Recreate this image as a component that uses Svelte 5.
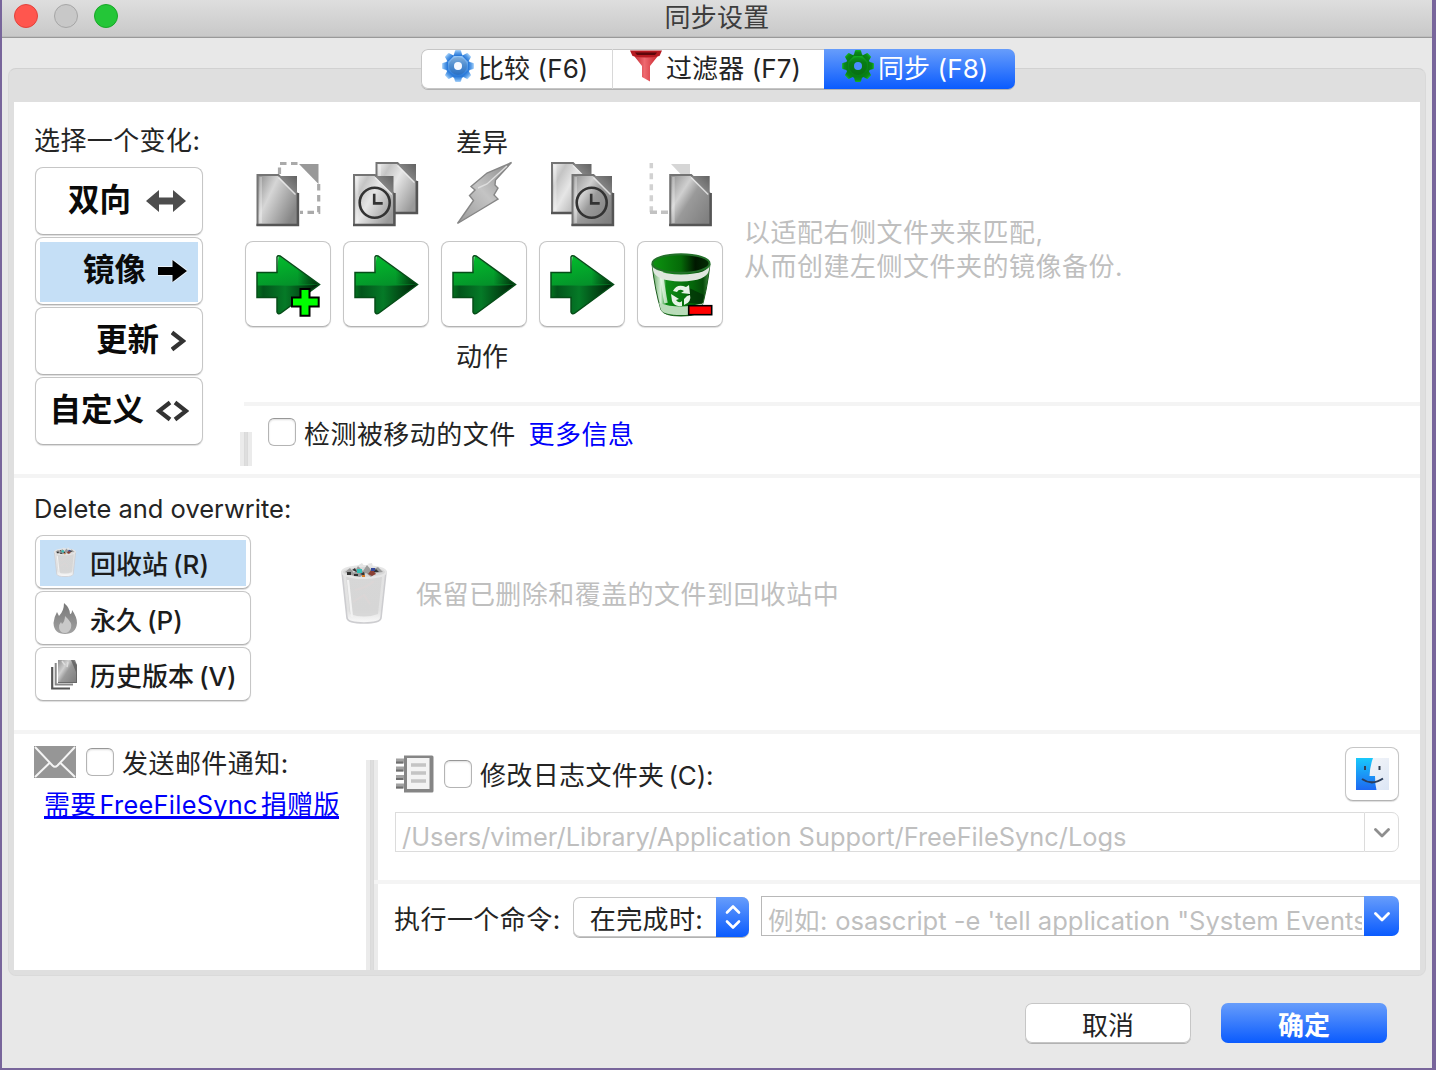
<script>
  const variants = [
    { label: '双向', icon: 'both' },
    { label: '镜像', icon: 'mirror', selected: true },
    { label: '更新', icon: 'gt' },
    { label: '自定义', icon: 'ltgt' }
  ];
  const categories = ['left-only', 'left-newer', 'conflict', 'right-newer', 'right-only'];
  const actions = ['create', 'copy', 'copy', 'copy', 'delete'];
  const deletion = [
    { label: '回收站', key: '(R)', icon: 'trash', selected: true },
    { label: '永久', key: '(P)', icon: 'flame' },
    { label: '历史版本', key: '(V)', icon: 'versions' }
  ];
  const teeth = [0, 45, 90, 135, 180, 225, 270, 315];
</script>

{#snippet gear(fill, hole)}
  <svg class="tab-icon" viewBox="0 0 32 32">
    <g fill={fill}>
      <circle cx="16" cy="16" r="12.2" />
      {#each teeth as a}
        <path d="M11.6 6 L13 .8 Q13.2 .1 14 .1 H18 Q18.8 .1 19 .8 L20.4 6Z" transform="rotate({a} 16 16)" />
      {/each}
    </g>
    <circle cx="16" cy="16" r="6.5" fill="none" stroke="#000" stroke-opacity=".1" stroke-width="5" />
    <circle cx="16" cy="16" r="4" fill={hole} />
  </svg>
{/snippet}

{#snippet doc(x, y, fill)}
  <g transform="translate({x} {y})">
    <path d="M1 1 H22 L41 20 V51 H1Z" fill={fill} stroke="#747474" stroke-width="2" />
    <path d="M3 3 V49 H5.5 V3Z" fill="#fff" opacity=".3" />
    <path d="M22 2 H40.5 V21.5Z" fill="url(#fold)" />
    <path d="M22 3.5 L39 20.5" stroke="#eee" stroke-width="1.6" opacity=".8" />
    <path d="M0 51 H41.5 V19" fill="none" stroke="#555" stroke-width="2.4" />
  </g>
{/snippet}

{#snippet clock(x, y)}
  <g fill="none" stroke="#333" transform="translate({x} {y})">
    <circle r="15" stroke-width="2.6" />
    <path d="M-.5 -9 V.7 H8" stroke-width="2.6" />
  </g>
{/snippet}

{#snippet trash()}
  <svg class="trash" viewBox="0 0 48 64">
    <path d="M2 10 L7 56 Q8 61 24 61 Q40 61 41 56 L46 10Z" fill="url(#bin)" stroke="#cdcdd0" stroke-width="1.6" />
    <path d="M6 14 Q18 20 30 15 Q38 13 42 15 L38 52 Q24 57 10 52Z" fill="#d3d3d3" opacity=".8" />
    <path d="M15 28 Q26 26 34 19 M13 40 L24 33 L30 42" stroke="#dbd6d6" stroke-width="2" fill="none" />
    <path d="M8 18 L12 55" stroke="#f2f2f2" stroke-width="2.2" />
    <ellipse cx="24" cy="10" rx="22" ry="6" fill="#d8d8d8" stroke="#e6e6e6" stroke-width="2" />
    <path d="M5 10 L10 6 L14 11 L18 4 L23 9 L27 3 L31 8 L38 5 L43 10 L35 11 L31 15 L26 11 L20 15 L14 14Z" fill="#9b9b9b" />
    <path d="M12 8 l3 -2 l2 4z M20 12 l4 -2 l1 4z M33 10 l3 -3 l3 3z M7 10h4v3h-4z M14 12h4v2h-4z" fill="#333" />
    <path d="M28 12 l4 -5 l4 5 l-4 2z" fill="#8a4034" /><path d="M31 6 h4 v3 h-4z" fill="#34489c" />
    <path d="M17 7 h5 v4 h-5z" fill="#31c2b8" /><path d="M22 13 h3 v2 h-3z" fill="#d87a26" />
    <path d="M17 4 l5 -3 l3 4z M27 2 l5 -1 l1 4z" fill="#e4e4e4" />
  </svg>
{/snippet}

<svg class="defs" width="0" height="0">
  <defs>
    <linearGradient id="blueGear" x1="0" y1="0" x2="0" y2="1"><stop offset="0" stop-color="#a5d0f9" /><stop offset=".45" stop-color="#5b9fe8" /><stop offset="1" stop-color="#2273d6" /></linearGradient>
    <linearGradient id="greenGear" x1="0" y1="0" x2="0" y2="1"><stop offset="0" stop-color="#17b823" /><stop offset=".35" stop-color="#0a8a1a" /><stop offset="1" stop-color="#087a14" /></linearGradient>
    <linearGradient id="funnel" x1="0" y1="0" x2="1" y2="0"><stop offset="0" stop-color="#b3141c" /><stop offset=".45" stop-color="#ee6a70" /><stop offset="1" stop-color="#c4161f" /></linearGradient>
    <linearGradient id="fold" x1="0" y1="1" x2="1" y2="0"><stop offset="0" stop-color="#a5a5a5" /><stop offset="1" stop-color="#626262" /></linearGradient>
    <linearGradient id="paper" x1="0" y1="0" x2="1" y2=".6"><stop offset="0" stop-color="#8a8a8a" /><stop offset=".4" stop-color="#d6d6d6" /><stop offset=".65" stop-color="#b4b4b4" /><stop offset="1" stop-color="#868686" /></linearGradient>
    <linearGradient id="paperLight" x1="0" y1="0" x2="1" y2=".7"><stop offset="0" stop-color="#f4f4f4" /><stop offset=".25" stop-color="#c4c4c4" /><stop offset=".5" stop-color="#e6e6e6" /><stop offset="1" stop-color="#9a9a9a" /></linearGradient>
    <linearGradient id="paperDark" x1="0" y1="0" x2="1" y2=".8"><stop offset="0" stop-color="#8e8e8e" /><stop offset=".35" stop-color="#d0d0d0" /><stop offset=".55" stop-color="#9a9a9a" /><stop offset="1" stop-color="#808080" /></linearGradient>
    <linearGradient id="bolt" x1="1" y1="0" x2="0" y2="1"><stop offset="0" stop-color="#888" /><stop offset=".5" stop-color="#c4c4c4" /><stop offset="1" stop-color="#9a9a9a" /></linearGradient>
    <linearGradient id="arrowTop" x1="0" y1="0" x2=".25" y2="1"><stop offset="0" stop-color="#02c32c" /><stop offset=".6" stop-color="#04922a" /><stop offset="1" stop-color="#037023" /></linearGradient>
    <linearGradient id="arrowLow" x1="0" y1="0" x2="1" y2="0"><stop offset="0" stop-color="#03721e" /><stop offset=".1" stop-color="#02551b" /><stop offset=".45" stop-color="#057a27" /><stop offset="1" stop-color="#001d06" /></linearGradient>
    <linearGradient id="tip" x1="0" y1="0" x2="1" y2="0"><stop offset=".65" stop-color="#001d06" stop-opacity="0" /><stop offset="1" stop-color="#001d06" stop-opacity=".9" /></linearGradient>
    <linearGradient id="bucket" x1="0" y1="0" x2="1" y2="0"><stop offset="0" stop-color="#5fa45f" /><stop offset=".15" stop-color="#d8f0d8" /><stop offset=".25" stop-color="#0d8d15" /><stop offset=".7" stop-color="#04660a" /><stop offset=".88" stop-color="#064a0a" /><stop offset="1" stop-color="#4b9a4b" /></linearGradient>
    <linearGradient id="mouth" x1="0" y1="0" x2="1" y2="0"><stop offset="0" stop-color="#0c9410" /><stop offset=".5" stop-color="#056a08" /><stop offset=".75" stop-color="#001800" /><stop offset="1" stop-color="#022c04" /></linearGradient>
    <linearGradient id="bin" x1="0" y1="0" x2="0" y2="1"><stop offset="0" stop-color="#e3e3e3" /><stop offset=".75" stop-color="#e2e2e2" /><stop offset="1" stop-color="#fafafa" /></linearGradient>
    <linearGradient id="flame" x1="0" y1="0" x2="0" y2="1"><stop offset="0" stop-color="#777" /><stop offset="1" stop-color="#a2a2a2" /></linearGradient>
    <linearGradient id="finder" x1="0" y1="0" x2="0" y2="1"><stop offset="0" stop-color="#19c9fb" /><stop offset="1" stop-color="#1d68f2" /></linearGradient>
    <linearGradient id="finderR" x1="0" y1="0" x2="1" y2="1"><stop offset="0" stop-color="#f8f8f9" /><stop offset="1" stop-color="#dce6f5" /></linearGradient>
  </defs>
</svg>

<div class="window">
  <header class="titlebar">
    <div class="lights"><i class="red"></i><i class="gray"></i><i class="green"></i></div>
    <h1>同步设置</h1>
  </header>

  <main class="body">
    <nav class="tabs">
      <button class="tab t1">{@render gear('url(#blueGear)', '#f6f9ff')}<span>比较 (F6)</span></button>
      <button class="tab t2">
        <svg class="tab-icon" viewBox="0 0 32 32">
          <path d="M1 2 L12 16 V27 L20 31.5 V16 L31 2Z" fill="url(#funnel)" />
          <path d="M0 .5 H32 L29.5 6 Q16 9 2.5 6Z" fill="#b51a20" />
          <path d="M5 2.6 H27 L25 5 H7Z" fill="#5d060a" />
        </svg>
        <span>过滤器 (F7)</span>
      </button>
      <button class="tab t3 active">{@render gear('url(#greenGear)', '#4a8cff')}<span>同步 (F8)</span></button>
    </nav>

    <div class="group">
      <div class="panel">
        <section class="sync">
          <div class="variants">
            <p class="label">选择一个变化:</p>
            {#each variants as v}
              <button class="variant {v.icon}" class:selected={v.selected}>
                <span class="fill">
                  <span class="vtext">{v.label}</span>
                  {#if v.icon === 'both'}
                    <svg width="40" height="22" viewBox="0 0 40 22"><path d="M0 11 L13 0 V7.5 H27 V0 L40 11 L27 22 V14.5 H13 V22Z" fill="#4d4d4d" /></svg>
                  {:else if v.icon === 'mirror'}
                    <svg width="29" height="22" viewBox="0 0 29 22"><path d="M0 7 H14.5 V0 L29 11 L14.5 22 V15 H0Z" fill="#000" stroke="#e8f2fb" stroke-width="2" paint-order="stroke" /></svg>
                  {:else if v.icon === 'gt'}
                    <svg width="15" height="22" viewBox="0 0 15 22"><path d="M1 2.5 L12 11 L1 19.5" fill="none" stroke="#333" stroke-width="4.2" /></svg>
                  {:else}
                    <svg class="wide" width="33" height="22" viewBox="0 0 33 22"><path d="M14 2.5 L3 11 L14 19.5 M19 2.5 L30 11 L19 19.5" fill="none" stroke="#333" stroke-width="4.2" /></svg>
                  {/if}
                </span>
              </button>
            {/each}
          </div>

          <div class="config">
            <div class="top">
              <div class="matrix">
                <p class="caption">差异</p>
                <div class="cells">
                  {#each categories as c}
                    <svg width="86" height="70" viewBox="0 0 86 70">
                      {#if c === 'left-only'}
                        <path d="M34.5 14 V3.5 H56 M73.7 24 V52.3 H55" fill="none" stroke="#aaa" stroke-width="3.2" stroke-dasharray="6.5 4.5" />
                        <path d="M54 4 H73.5 V24Z" fill="#999" />
                        {@render doc(11.5, 14, 'url(#paper)')}
                      {:else if c === 'left-newer'}
                        {@render doc(32.5, 2, 'url(#paperLight)')}
                        {@render doc(10, 14, 'url(#paperLight)')}
                        {@render clock(31.7, 42.7)}
                      {:else if c === 'conflict'}
                        <path d="M70.5 2.5 L46 13 L30 26.5 L34 30 L28.5 35.5 L32.5 40.5 L16.5 63.5 L39 50 L57 39 L53 35 L57 28 L54 25 L54.5 20Z" fill="url(#bolt)" stroke="#868686" stroke-width="1.4" />
                        <path d="M66 6 L46 24 L37 28" fill="none" stroke="#dedede" stroke-width="1.4" />
                      {:else if c === 'right-newer'}
                        {@render doc(12, 2, 'url(#paperLight)')}
                        {@render doc(32.5, 14, 'url(#paperDark)')}
                        {@render clock(52.7, 42.7)}
                      {:else}
                        <path d="M14.3 52.3 V3" fill="none" stroke="#d2d2d2" stroke-width="3.5" stroke-dasharray="6 5" />
                        <path d="M13 52.3 H31" fill="none" stroke="#c2c2c2" stroke-width="3.5" stroke-dasharray="7 4" />
                        <path d="M34 4 H53 V24Z" fill="#d6d6d6" />
                        {@render doc(32.2, 14, 'url(#paperDark)')}
                      {/if}
                    </svg>
                  {/each}
                </div>
                <div class="cells acts">
                  {#each actions as a}
                    <button class="act">
                      <svg width="86" height="86" viewBox="0 0 86 86">
                        {#if a === 'delete'}
                          <path d="M15 23 Q18 50 24 69 Q27 75 44 75 Q61 75 64 69 Q70 50 73 23Z" fill="url(#bucket)" stroke="#1c5c1e" stroke-width="1" />
                          <path d="M22 62 Q43 69 66 62 L64 69 Q61 74 44 74 Q27 74 24 69Z" fill="#b9dcb9" />
                          <path d="M50 46 L67 54 L65 63 L52 62Z" fill="#022e05" opacity=".7" />
                          <path d="M24 30 Q27 52 29 62" stroke="#eefaee" stroke-width="3.5" fill="none" opacity=".75" />
                          <path d="M15 22 Q15 33 44 33.5 Q73 33 73 22 L72 29 Q70 40 44 40.5 Q18 40 16 29Z" fill="#dfe6df" />
                          <ellipse cx="44" cy="22.5" rx="28.6" ry="9.3" fill="url(#mouth)" stroke="#23702a" stroke-width="2" />
                          <path d="M36 50 Q40 42 49 46 L52 44 L53 53 L44 52 L47 50 Q42 47 40 51Z M34 53 L42 58 L39 59 Q42 63 45 60 L45 65 Q37 66 35 60Z M53 54 Q55 61 47 64 V58 L50 55Z" fill="#e6f3e6" />
                          <rect x="51.7" y="64.7" width="23" height="9" fill="#f00" stroke="#000" stroke-width="1.6" />
                        {:else}
                          <path d="M12 31.5 H32 L33.5 14.5 L74.5 43.5 L34.5 73 L32 71 V56.5 H12Z" fill="url(#arrowTop)" />
                          <path d="M12 44.5 H32 Q60 45 74.5 43.5 L34.5 73 L32 71 V56.5 H12Z" fill="url(#arrowLow)" />
                          <path d="M12 31.5 H32 L33.5 14.5 L74.5 43.5 H12Z" fill="url(#tip)" />
                          <path d="M12 31.5 H32 V16 Q33 14 35 15 L74.5 43.5 L36 72 Q33 74 32 71 V56.5 H12Z" fill="none" stroke="#064d18" stroke-width="1.5" />
                          {#if a === 'create'}
                            <path d="M55.5 48 H64.5 V56.5 H73.7 V65.5 H64.5 V74.7 H55.5 V65.5 H47 V56.5 H55.5Z" fill="#0f0" stroke="#000" stroke-width="2" />
                          {/if}
                        {/if}
                      </svg>
                    </button>
                  {/each}
                </div>
                <p class="caption low">动作</p>
              </div>
              <p class="hint">以适配右侧文件夹来匹配,<br />从而创建左侧文件夹的镜像备份.</p>
            </div>
            <div class="rule inset"></div>
            <div class="moved">
              <div class="vsep short"></div>
              <span class="check"></span>
              <span class="text">检测被移动的文件</span>
              <a class="more">更多信息</a>
            </div>
          </div>
        </section>

        <div class="rule"></div>

        <section class="delete">
          <div class="handling">
            <p class="label latin">Delete and overwrite:</p>
            {#each deletion as d}
              <button class="choice" class:selected={d.selected}>
                <span class="fill">
                  <span class="cicon">
                    {#if d.icon === 'trash'}
                      {@render trash()}
                    {:else if d.icon === 'flame'}
                      <svg width="24" height="31" viewBox="0 0 24 31"><path d="M11 0 Q17 5 17 11 Q19 11 19 7 Q24 14 24 20 Q23 31 12 31 Q1 31 .5 20 Q1 14 4 9 L6 13 Q11 8 11 0Z" fill="url(#flame)" /><path d="M12 13 Q20 20 18 25 Q16 30 12 30 Q7 30 6 25 Q6 21 8 19 L9 21 Q12 18 12 13Z" fill="#c9c9c9" /></svg>
                    {:else}
                      <svg width="27" height="31" viewBox="0 0 27 31"><path d="M1.2 8 V29.5 H19" fill="none" stroke="#555" stroke-width="2.2" /><path d="M4.7 4 V25.5 H22" fill="none" stroke="#888" stroke-width="2" /><path d="M7 1 H22 L26 6 V24 H7Z" fill="url(#paperDark)" /><path d="M7 10 V23 H25 V13 L20 1 H24 L26 6 V24 H7Z" fill="#5c5c5c" opacity=".75" /><path d="M11 2 L14 6 M17 3 L16 8" stroke="#ddd" stroke-width="1.5" /></svg>
                    {/if}
                  </span>
                  <span class="ctext">{d.label}<span class="key">{d.key}</span></span>
                </span>
              </button>
            {/each}
          </div>
          <div class="explain">
            {@render trash()}
            <span>保留已删除和覆盖的文件到回收站中</span>
          </div>
        </section>

        <div class="rule"></div>

        <section class="misc">
          <div class="mail">
            <div class="mailrow">
              <svg width="42" height="32" viewBox="0 0 42 32"><path d="M0 0 H42 V32 H0Z" fill="#969696" /><path d="M1 1 L18.5 19.5 Q21 22 23.5 19.5 L41 1 M1 31 L15.5 17 M41 31 L26.5 17" fill="none" stroke="#f4f4f4" stroke-width="2" /></svg>
              <span class="check"></span>
              <span class="text">发送邮件通知:</span>
            </div>
            <a class="donate">需要<span>FreeFileSync</span>捐赠版</a>
          </div>
          <div class="vsep"></div>
          <div class="options">
            <div class="log">
              <div class="logrow">
                <svg width="39" height="38" viewBox="0 0 39 38">
                  <path d="M9 .5 H37 Q38.5 .5 38.5 2 V36 Q38.5 37.5 37 37.5 H9Z" fill="#858585" />
                  <path d="M12 3 H34.5 V34 H12Z" fill="#f3f3f3" />
                  <path d="M16 10 H31 M16 18 H31 M16 26 H31" stroke="#c4c4c4" stroke-width="3.6" />
                  <path d="M1 6 H9 M1 14 H9 M1 22.5 H9 M1 31 H9" stroke="#a2a2a2" stroke-width="5" />
                  <path d="M1 7.5 H8 M1 15.5 H8 M1 24 H8 M1 32.5 H8" stroke="#6e6e6e" stroke-width="2" />
                </svg>
                <span class="check"></span>
                <span class="text">修改日志文件夹<span class="key">(C):</span></span>
                <button class="finder">
                  <svg width="33" height="32" viewBox="0 0 33 32">
                    <path d="M0 0 H33 V32 H0Z" fill="url(#finderR)" />
                    <path d="M0 0 H17 Q14 8 13.5 18 H19 Q19 26 20.5 32 H0Z" fill="url(#finder)" />
                    <path d="M9 8 V12 M23.5 8 V12" stroke="#333f50" stroke-width="2" />
                    <path d="M6 21 Q16 28 27 20.5" fill="none" stroke="#2b3e5c" stroke-width="2" />
                  </svg>
                </button>
              </div>
              <div class="combo disabled">
                <span class="field"><span>/Users/vimer/Library/Application Support/FreeFileSync/Logs</span></span>
                <span class="drop"><svg width="16" height="10" viewBox="0 0 16 10"><path d="M1.5 1.5 L8 8 L14.5 1.5" fill="none" stroke="#8e8e8e" stroke-width="2.8" stroke-linecap="round" stroke-linejoin="round" /></svg></span>
              </div>
            </div>
            <div class="rule"></div>
            <div class="command">
              <span class="text">执行一个命令:</span>
              <button class="select">
                <span>在完成时:</span>
                <i><svg width="16" height="26" viewBox="0 0 16 26"><path d="M2 8.5 L8 2.5 L14 8.5 M2 17.5 L8 23.5 L14 17.5" fill="none" stroke="#fff" stroke-width="2.6" stroke-linecap="round" stroke-linejoin="round" /></svg></i>
              </button>
              <div class="combo">
                <span class="field"><span><b>例如:</b> osascript -e 'tell application "System Events</span></span>
                <span class="drop"><svg width="16" height="10" viewBox="0 0 16 10"><path d="M1.5 1.5 L8 8 L14.5 1.5" fill="none" stroke="#fff" stroke-width="2.8" stroke-linecap="round" stroke-linejoin="round" /></svg></span>
              </div>
            </div>
          </div>
        </section>
      </div>
    </div>

    <footer class="footer">
      <button class="cancel">取消</button>
      <button class="ok">确定</button>
    </footer>
  </main>
</div>

<style>
  :global(body) { background: #78659b; overflow: hidden; }
  * { box-sizing: border-box; }
  svg { display: block; flex: none; }
  p, h1 { margin: 0; font-weight: 400; }
  b { font-weight: 400; letter-spacing: .5px; }
  button { margin: 0; padding: 0; border: 0; font: inherit; color: inherit; letter-spacing: inherit; }
  .defs { position: absolute; }
  .window {
    width: 1436px; height: 1070px; padding: 0 4px 2px 2px; background: #78659b;
    font-family: Inter, "Noto Sans CJK SC", sans-serif; font-size: 26px; line-height: 34px;
    color: #242424; white-space: nowrap; display: flex; flex-direction: column;
  }
  .titlebar {
    height: 38px; flex: none; display: grid; grid-template-columns: 1fr auto 1fr; align-items: start;
    background: linear-gradient(#dedede, #c8c8c8); border-bottom: 1px solid #999; box-shadow: inset 0 -1px #bdbdbd;
  }
  .titlebar h1 { font-size: 26px; line-height: 35px; color: #3d3d3d; letter-spacing: .2px; }
  .lights { display: flex; gap: 16px; padding: 4px 0 0 12px; }
  .lights i { width: 24px; height: 24px; border-radius: 50%; border: 1px solid; }
  .red { background: #ff564e; border-color: #e2423b !important; }
  .gray { background: #c8c8c8; border-color: #a6a6a6 !important; }
  .green { background: #24c638; border-color: #18a727 !important; }

  .body { flex: 1; background: #e8e8e8; display: flex; flex-direction: column; padding: 11px 6px 0; }
  .tabs {
    position: relative; z-index: 1; height: 40px; flex: none; margin: 0 0 -21px 413px; width: 594px; display: flex;
    border-radius: 7px; background: #fff; box-shadow: inset 0 0 0 1px #c6c6c6, 0 1px 0 #b2b2b2;
  }
  .tab { display: flex; align-items: flex-start; background: none; padding-top: 1px; }
  .tab span { line-height: 40px; margin-top: -1px; }
  .tab-icon { width: 32px; height: 32px; }
  .t1 { width: 192px; padding-left: 21px; gap: 4px; border-right: 1px solid #d8d8d8; letter-spacing: .1px; }
  .t2 { width: 211px; padding-left: 17px; gap: 4px; letter-spacing: .1px; }
  .t3 { width: 191px; padding-left: 18px; gap: 4px; letter-spacing: .1px; }
  .tab.active { background: linear-gradient(#679dfb, #0a5bfe); color: #fff; border-radius: 0 7px 7px 0; }

  .group {
    height: 908px; flex: none; border: 1px solid #d1d1d1; border-left-color: #d9d9d9; border-right-color: #d9d9d9; border-bottom-color: #dadada;
    border-radius: 8px; background: #dfdfdf; padding: 33px 5px 5px;
  }
  .panel { height: 868px; background: #fff; display: flex; flex-direction: column; }
  .rule { height: 4px; flex: none; background: #f4f4f4; }
  .text { letter-spacing: .45px; }

  .sync { height: 372px; display: flex; }
  .variants { width: 226px; padding: 22px 0 0 21px; display: flex; flex-direction: column; gap: 2px; }
  .label { height: 41px; letter-spacing: .4px; margin-left: -1px; line-height: 34px; }
  .variant, .choice, .act, .finder {
    background: #fff; border: 1px solid #c6c6c6; border-bottom-color: #b3b3b3; border-radius: 8px; box-shadow: 0 1px 1px #ddd;
  }
  .variant { width: 168px; height: 68px; padding: 4px 4px 2px; flex: none; color: #0a0a0a; }
  .fill { display: flex; width: 100%; height: 100%; align-items: center; }
  .variant .fill { justify-content: flex-end; gap: 12px; padding: 0 12px 2px 0; }
  .variant.both .fill { gap: 15px; }
  .variant.mirror .fill { padding-right: 11px; }
  .variant.selected .fill, .choice.selected .fill { background: #c5dff6; }
  .vtext { font-size: 31.5px; font-weight: 700; line-height: 55px; margin-bottom: 3px; }
  .wide { margin-right: -3px; }

  .config { flex: 1; display: flex; flex-direction: column; }
  .top { height: 300px; display: flex; padding: 24px 0 0 5px; }
  .matrix { width: 478px; }
  .caption { width: 474px; text-align: center; height: 34px; }
  .cells { display: flex; gap: 12px; }
  .acts { margin: 11px 0 13px; }
  .act { width: 86px; height: 86px; flex: none; display: flex; align-items: center; justify-content: center; }
  .hint { margin: 90px 0 0 21px; color: #bfbfbf; letter-spacing: .5px; }
  .inset { margin-left: 4px; }
  .moved { height: 68px; display: flex; align-items: flex-start; padding-top: 12px; }
  .check {
    width: 28px; height: 28px; flex: none; border-radius: 6px; background: #fff; border: 1px solid #b4b4b4; border-top-color: #979797;
    box-shadow: inset 0 1px 2px #ddd;
  }
  .moved .check { margin: 0 8px 0 16px; }
  .more { margin-left: 13px; letter-spacing: .5px; color: #0000fb; }
  .vsep {
    width: 12px; flex: none; background: linear-gradient(90deg, #ebebeb 4px, #d6d6d6 4px, #dedede 5px, #dedede 7px, #d6d6d6 8px, #ebebeb 8px);
  }
  .vsep.short { height: 34px; margin-top: 14px; }

  .delete { height: 252px; display: flex; }
  .handling { width: 326px; padding: 14px 0 0 21px; display: flex; flex-direction: column; gap: 2px; }
  .latin { font-size: 25.5px; letter-spacing: 0; line-height: 34px; }
  .choice { width: 216px; height: 54px; padding: 4px 4px 2px; flex: none; }
  .choice .fill { padding-bottom: 2px; }
  .cicon { width: 27px; margin: 0 12px 0 11px; display: flex; justify-content: center; }
  .cicon .trash { width: 24px; height: 31px; }
  .ctext { font-weight: 500; color: #1c1c1c; padding-top: 5px; }
  .key { margin-left: 5px; }
  .explain { display: flex; align-items: flex-start; padding-top: 84px; gap: 28px; color: #bfbfbf; letter-spacing: .45px; }
  .explain .trash { width: 48px; height: 64px; }
  .explain span { margin-top: 16px; }

  .misc { height: 236px; display: flex; }
  .mail { width: 352px; padding: 11px 0 0 20px; }
  .mailrow { display: flex; align-items: center; height: 34px; }
  .mailrow .check { margin: 0 8px 0 10px; }
  .mailrow .text { padding-top: 4px; }
  .donate {
    display: block; width: 295px; height: 32px; overflow: hidden; margin: 8px 0 0 10px;
    color: #0000fb; border-bottom: 3px solid #0000fb; line-height: 36px; letter-spacing: .3px;
  }
  .donate span { margin: 0 3px; font-size: 25.3px; }
  .misc .vsep { height: 210px; margin-top: 26px; }
  .options { flex: 1; margin-left: -4px; display: flex; flex-direction: column; min-width: 0; }
  .log { height: 146px; padding: 13px 21px 0; }
  .logrow { display: flex; align-items: center; height: 54px; }
  .logrow .check { margin: 0 8px 0 10px; }
  .logrow .text { padding-top: 4px; letter-spacing: .35px; }
  .logrow .key { margin-left: 4px; letter-spacing: -.1px; }
  .finder { width: 54px; height: 54px; margin-left: auto; display: flex; align-items: center; justify-content: center; }
  .combo { display: flex; height: 40px; }
  .log .combo { margin-top: 11px; }
  .field { flex: 1; min-width: 0; overflow: hidden; line-height: 48px; padding: 0 2px 0 6px; color: #bfbfbf; border: 1px solid #b8b8b8; border-right: 0; font-size: 25.55px; }
  .field span { display: block; overflow: hidden; }
  .drop { width: 35px; flex: none; border-radius: 0 7px 7px 0; display: flex; align-items: center; justify-content: center; background: linear-gradient(#679dfb, #0a5bfe); padding-top: 1px; }
  .disabled .field { border-color: #dcdcdc; font-size: 25.4px; }
  .disabled .drop { background: #fff; border: 1px solid #dcdcdc; }
  .command { display: flex; padding: 12px 21px 0 20px; }
  .command .text { width: 179px; line-height: 47px; }
  .command .combo { flex: 1; min-width: 0; margin-left: 12px; }
  .select { width: 176px; height: 40px; margin-top: 1px; background: #fff; border-radius: 7px; display: flex; box-shadow: inset 0 0 0 1px #c6c6c6, 0 1px 0 #b2b2b2; }
  .select span { flex: 1; line-height: 45px; padding-left: 4px; letter-spacing: .4px; }
  .select i { width: 33px; height: 40px; border-radius: 0 7px 7px 0; background: linear-gradient(#679dfb, #0a5bfe); display: flex; align-items: center; justify-content: center; }

  .footer { display: flex; justify-content: flex-end; gap: 30px; padding: 27px 39px 0 0; }
  .footer button { width: 166px; height: 40px; border-radius: 7px; line-height: 45px; }
  .cancel { background: #fff; box-shadow: inset 0 0 0 1px #c6c6c6, 0 1px 0 #b2b2b2; }
  .ok { background: linear-gradient(#679dfb, #0a5bfe); color: #fff; font-weight: 700 !important; }
</style>
